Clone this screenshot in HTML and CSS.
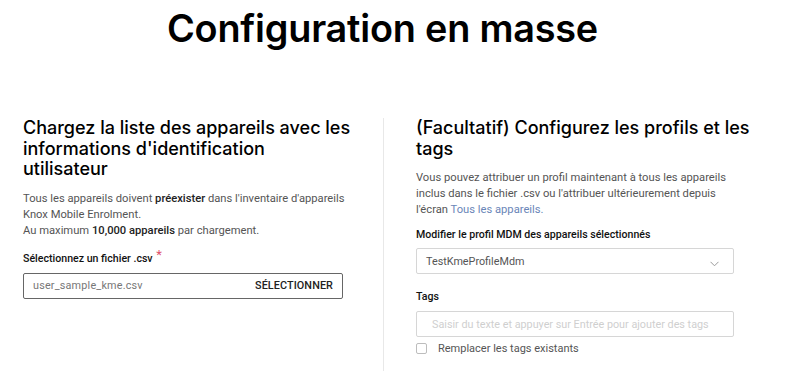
FILE: index.html
```html
<!DOCTYPE html>
<html lang="fr">
<head>
<meta charset="utf-8">
<title>Configuration en masse</title>
<link rel="stylesheet" href="styles.css">
</head>
<body>
<div class="page">
  <h1 class="title">Configuration en masse</h1>
  <div class="columns">
    <section class="col col-left">
      <h2 class="heading heading-left">Chargez la liste des appareils avec les informations d'identification utilisateur</h2>
      <p class="desc">Tous les appareils doivent <b>préexister</b> dans l'inventaire d'appareils Knox Mobile Enrolment.<br>Au maximum <b>10,000 appareils</b> par chargement.</p>
      <div class="label">Sélectionnez un fichier .csv <span class="req">*</span></div>
      <div class="file-box">
        <span class="file-name">user_sample_kme.csv</span>
        <span class="file-btn">SÉLECTIONNER</span>
      </div>
    </section>
    <section class="col col-right">
      <h2 class="heading">(Facultatif) Configurez les profils et les tags</h2>
      <p class="desc desc-right">Vous pouvez attribuer un profil maintenant à tous les appareils inclus dans le fichier .csv ou l'attribuer ultérieurement depuis<br>l'écran <span class="link">Tous les appareils.</span></p>
      <div class="label">Modifier le profil MDM des appareils sélectionnés</div>
      <div class="select">
        <span>TestKmeProfileMdm</span>
        <svg class="chev" width="9" height="6" viewBox="0 0 9 6"><path d="M0.5 0.8 L4.5 4.8 L8.5 0.8" fill="none" stroke="#9a9a9a" stroke-width="1"/></svg>
      </div>
      <div class="label label-tags">Tags</div>
      <div class="tags-input">Saisir du texte et appuyer sur Entrée pour ajouter des tags</div>
      <label class="check"><span class="box"></span><span>Remplacer les tags existants</span></label>
    </section>
  </div>
</div>
</body>
</html>
```
FILE: styles.css
```css
html, body {
  margin: 0;
  padding: 0;
  background: #ffffff;
}
body {
  font-family: "Roboto", "Noto Sans", sans-serif;
  color: #222;
}
.page {
  width: 794px;
}
.title {
  margin: 0;
  width: 765px;
  text-align: center;
  font-family: "Inter", sans-serif;
  font-weight: 600;
  font-size: 37.8px;
  line-height: 56px;
  letter-spacing: -0.2px;
  color: #000;
}
.columns {
  display: grid;
  grid-template-columns: 383px 1fr;
  margin-top: 62px;
}
.col-left {
  padding-left: 23px;
  padding-right: 30px;
}
.col-right {
  border-left: 1px solid #e8e8e8;
  padding-left: 32px;
  padding-right: 30px;
  padding-bottom: 24px;
}
.heading {
  margin: 0;
  font-family: "Inter", sans-serif;
  font-weight: 500;
  font-size: 18px;
  line-height: 20.5px;
  color: #000;
  letter-spacing: 0;
}
.heading-left {
  max-width: 328px;
}
.desc {
  margin: 11px 0 0;
  font-size: 11.2px;
  line-height: 16px;
  color: #555;
}
.desc-right {
  max-width: 314px;
}
.desc b {
  font-weight: 500;
  color: #222;
}
.link {
  color: #6a86b8;
}
.label {
  margin-top: 9px;
  font-size: 10.6px;
  line-height: 16px;
  font-weight: 500;
  color: #111;
}
.col-left .label {
  margin-top: 8px;
}
.req {
  color: #e0506a;
  font-weight: 400;
  font-size: 13px;
  vertical-align: 3px;
  margin-left: 1px;
}
.file-box {
  margin-top: 6px;
  width: 320px;
  height: 26px;
  box-sizing: border-box;
  border: 1px solid #666;
  border-radius: 2px;
  display: flex;
  align-items: center;
  justify-content: space-between;
  padding: 0 9px 0 9px;
  font-size: 10.8px;
}
.file-name {
  color: #777;
  letter-spacing: 0.2px;
}
.file-btn {
  color: #222;
  font-weight: 500;
  letter-spacing: 0.1px;
}
.select {
  margin-top: 5px;
  width: 318px;
  height: 26px;
  box-sizing: border-box;
  border: 1px solid #d6d6d6;
  border-radius: 2px;
  display: flex;
  align-items: center;
  justify-content: space-between;
  padding: 0 14px 0 9px;
  font-size: 10.8px;
  color: #555;
}
.chev {
  margin-top: 5px;
}
.label-tags {
  margin-top: 15px;
}
.tags-input {
  margin-top: 6px;
  width: 318px;
  height: 26px;
  box-sizing: border-box;
  border: 1px solid #d6d6d6;
  border-radius: 2px;
  display: flex;
  align-items: center;
  padding: 0 15px;
  font-size: 10.8px;
  color: #cfcfcf;
}
.check {
  margin-top: 5px;
  display: flex;
  align-items: center;
  gap: 11px;
  font-size: 11px;
  color: #555;
}
.box {
  width: 9px;
  height: 9px;
  border: 1px solid #bdbdbd;
  border-radius: 2px;
}
```
